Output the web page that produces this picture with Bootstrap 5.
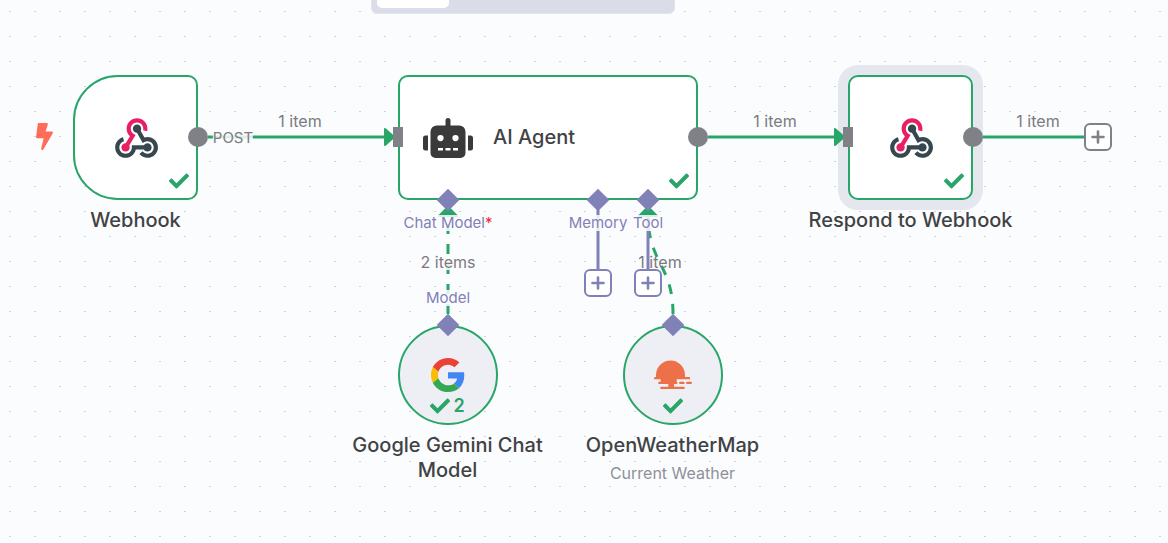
<!DOCTYPE html>
<html lang="en">
<head>
<meta charset="utf-8">
<meta name="viewport" content="width=device-width, initial-scale=1">
<title>Workflow editor</title>
<link href="https://cdn.jsdelivr.net/npm/bootstrap@5.3.0/dist/css/bootstrap.min.css" rel="stylesheet">
<style>
  :root { --ok: #29a568; --port: #7f8186; --ai: #7f81b7; --paper: #fbfcfe; --ink: #414244; }
  body { font-family: Inter, "Liberation Sans", sans-serif; color: var(--ink); background: var(--paper); }

  /* dotted canvas */
  .canvas { min-height: 100vh; background: linear-gradient(#c9cbd1, #c9cbd1) 9px 11px / 25px 25px var(--paper); background: conic-gradient(from 270deg at 2px 1px, #d0d2d7 90deg, transparent 0) 9px 11px / 25px 25px var(--paper); }
  .edges { position: absolute; left: 0; top: 0; width: 100%; height: 100%; overflow: visible; pointer-events: none; }

  /* editor / executions switch */
  .view-tabs { left: 371px; top: -24px; width: 304px; height: 38px; padding: 5px; background: #dadde8; border-radius: 6px; border: 1px solid #e3e5ee; }
  .view-tabs button { width: 72px; border: 0; border-radius: 5px; background: transparent; }
  .view-tabs .current { background: #fff; }

  /* nodes */
  .flow-node { position: absolute; width: 225px; z-index: 1; }
  .node-box { position: relative; width: 125px; height: 125px; border: 2px solid var(--ok); border-radius: 10px; background: #fff; }
  .node-trigger { border-radius: 45px 10px 10px 45px; }
  .node-agent { width: 300px; padding-left: 23px; gap: 20px; }
  .node-round { width: 100px; height: 100px; border-radius: 50%; background: #eeeff5; }
  .node-selected { box-shadow: 0 0 0 10px #e5e7ef; }
  .node-title { font-size: 20px; line-height: 25px; font-weight: 450; }
  .node-sub { margin-top: 5px; font-size: 16px; line-height: 20px; color: #8f9199; }
  .node-status { position: absolute; right: 7px; bottom: 7px; gap: 3px; color: var(--ok); font-size: 18px; line-height: 22px; font-weight: 600; }
  .node-round .node-status { left: 0; right: 0; bottom: 6px; min-height: 22px; }
  #webhook { left: 23px; top: 75px; }
  #agent { left: 398px; top: 75px; width: 300px; }
  #respond { left: 798px; top: 75px; }
  #gemini { left: 335px; top: 325px; }
  #weather { left: 560px; top: 325px; }
  .trigger-mark { position: absolute; left: 36px; top: 123px; }

  /* ports */
  .port { position: absolute; z-index: 3; width: 20px; height: 20px; background: var(--port); transform: translate(-50%, -50%); }
  .port-out { border-radius: 50%; }
  .port-in { width: 10px; }
  .port-ai { width: 16px; height: 16px; background: var(--ai); transform: translate(-50%, -50%) rotate(45deg); }

  /* labels */
  .tag { position: absolute; z-index: 2; transform: translate(-50%, -50%); white-space: nowrap; font-size: 16px; line-height: 16px; color: #7a7b80; }
  .tag-port { font-size: 15px; background: rgba(251, 252, 254, .85); }
  .tag-items { background: rgba(251, 252, 254, .85); }
  .tag-ai { color: var(--ai); }
  .tag-req { color: #f0282d; }

  .add-btn { position: absolute; z-index: 2; width: 28px; height: 28px; border: 2px solid var(--port); border-radius: 6px; background: #fff; color: var(--port); transform: translate(-50%, -50%); }
  .add-ai { border-color: var(--ai); color: var(--ai); }
</style>
</head>
<body>
<svg width="0" height="0" class="position-absolute" aria-hidden="true">
  <symbol id="i-hook" viewBox="0 0 48 48">
    <path fill="#37474f" d="M35 37c-2.2 0-4-1.8-4-4s1.8-4 4-4 4 1.8 4 4-1.8 4-4 4"/>
    <path fill="#37474f" d="M35 43c-3 0-5.9-1.4-7.8-3.7l3.1-2.5c1.1 1.4 2.9 2.3 4.7 2.3 3.3 0 6-2.7 6-6s-2.7-6-6-6c-1 0-2 .3-2.9.7l-1.7 1L23.3 16l3.5-1.9 5.3 9.4c1-.3 2-.5 3-.5 5.5 0 10 4.5 10 10S40.5 43 35 43"/>
    <path fill="#37474f" d="M14 43C8.5 43 4 38.5 4 33c0-4.6 3.1-8.5 7.5-9.7l1 3.9C9.9 27.9 8 30.3 8 33c0 3.3 2.7 6 6 6s6-2.7 6-6v-2h15v4H23.8c-.9 4.6-5 8-9.8 8"/>
    <path fill="#e91e63" d="M14 37c-2.2 0-4-1.8-4-4s1.8-4 4-4 4 1.8 4 4-1.8 4-4 4"/>
    <path fill="#37474f" d="M25 19c-2.2 0-4-1.8-4-4s1.8-4 4-4 4 1.8 4 4-1.8 4-4 4"/>
    <path fill="#e91e63" d="m15.7 34-3.4-2 5.9-9.7c-2-1.9-3.2-4.5-3.2-7.3 0-5.5 4.5-10 10-10s10 4.5 10 10c0 .9-.1 1.7-.3 2.5l-3.9-1c.1-.5.2-1 .2-1.5 0-3.3-2.7-6-6-6s-6 2.7-6 6c0 2.1 1.1 4 2.9 5.1l1.7 1z"/>
  </symbol>
  <symbol id="i-check" viewBox="0 0 512 512">
    <path fill="currentColor" d="M173.9 439.4 7.5 273c-10-10-10-26.200 0-36.200l36.200-36.200c10-10 26.200-10 36.200 0L192 312.700 432.100 72.600c10-10 26.200-10 36.200 0l36.200 36.200c10 10 10 26.200 0 36.200L210.100 439.400c-10 10-26.200 10-36.200 0z"/>
  </symbol>
  <symbol id="i-plus" viewBox="0 0 14 14">
    <path d="M7 1.500v11M1.500 7h11" fill="none" stroke="currentColor" stroke-width="2.600" stroke-linecap="round"/>
  </symbol>
</svg>

<main class="canvas position-relative overflow-hidden">
  <div class="view-tabs position-absolute d-flex" role="group" aria-label="View">
    <button type="button" class="current" aria-label="Editor" aria-pressed="true"></button>
    <button type="button" class="flex-grow-1" aria-label="Executions" aria-pressed="false"></button>
  </div>

  <svg class="trigger-mark" width="17" height="27" viewBox="0 0 320 512" aria-hidden="true"><path fill="#ff6d5a" d="M296 160H180.600l42.600-129.800C227.200 15 215.700 0 200 0H56C44 0 33.800 8.900 32.200 20.800l-32 240C-1.700 275.200 9.500 288 24 288h118.700L96.600 482.500c-3.600 15.200 8 29.500 23.300 29.500 8.400 0 16.400-4.400 20.800-12l176-304c9.300-15.900-2.200-36-20.700-36z"/></svg>

  <article class="flow-node d-flex flex-column align-items-center gap-2" id="webhook">
    <div class="node-box node-trigger d-flex align-items-center justify-content-center">
      <svg width="50" height="50"><use href="#i-hook"/></svg>
      <div class="node-status d-flex"><svg width="20" height="20"><use href="#i-check"/></svg></div>
    </div>
    <div class="node-title text-center">Webhook</div>
  </article>

  <article class="flow-node" id="agent">
    <div class="node-box node-agent d-flex align-items-center">
      <svg width="50" height="40" viewBox="0 0 640 512"><path fill="#3a3a3a" d="M32 224H64V416H32A32 32 0 0 1 0 384V256A32 32 0 0 1 32 224Zm512-48V448a64 64 0 0 1-64 64H160a64 64 0 0 1-64-64V176a80 80 0 0 1 80-80H288V32a32 32 0 0 1 64 0V96H464A80 80 0 0 1 544 176ZM264 256a40 40 0 1 0-40 40A40 40 0 0 0 264 256Zm-8 128H192v32h64Zm96 0H288v32h64ZM456 256a40 40 0 1 0-40 40A40 40 0 0 0 456 256Zm-8 128H384v32h64ZM640 256V384a32 32 0 0 1-32 32H576V224h32A32 32 0 0 1 640 256Z"/></svg>
      <div class="node-title">AI Agent</div>
      <div class="node-status d-flex"><svg width="20" height="20"><use href="#i-check"/></svg></div>
    </div>
  </article>

  <article class="flow-node d-flex flex-column align-items-center gap-2" id="respond">
    <div class="node-box node-selected d-flex align-items-center justify-content-center">
      <svg width="50" height="50"><use href="#i-hook"/></svg>
      <div class="node-status d-flex"><svg width="20" height="20"><use href="#i-check"/></svg></div>
    </div>
    <div class="node-title text-center position-relative">Respond to Webhook</div>
  </article>

  <article class="flow-node d-flex flex-column align-items-center gap-2" id="gemini">
    <div class="node-box node-round d-flex align-items-center justify-content-center">
      <svg width="34" height="34" viewBox="0 0 48 48">
        <path fill="#ea4335" d="M24 9.500c3.540 0 6.710 1.220 9.210 3.600l6.850-6.850C35.900 2.380 30.470 0 24 0 14.620 0 6.510 5.380 2.560 13.220l7.980 6.190C12.430 13.720 17.740 9.500 24 9.500z"/>
        <path fill="#4285f4" d="M46.980 24.550c0-1.570-.15-3.090-.38-4.550H24v9.020h12.940c-.58 2.960-2.260 5.480-4.780 7.180l7.730 6c4.510-4.180 7.090-10.360 7.090-17.650z"/>
        <path fill="#fbbc05" d="M10.530 28.590c-.48-1.450-.76-2.990-.76-4.590s.27-3.140.76-4.590l-7.980-6.190C.92 16.460 0 20.120 0 24c0 3.880.92 7.540 2.560 10.780l7.970-6.190z"/>
        <path fill="#34a853" d="M24 48c6.480 0 11.930-2.130 15.890-5.810l-7.730-6c-2.150 1.450-4.920 2.300-8.160 2.300-6.260 0-11.570-4.220-13.470-9.910l-7.980 6.190C6.510 42.620 14.620 48 24 48z"/>
      </svg>
      <div class="node-status d-flex align-items-center justify-content-center"><svg width="20" height="20"><use href="#i-check"/></svg><span>2</span></div>
    </div>
    <div class="node-title text-center">Google Gemini Chat Model</div>
  </article>

  <article class="flow-node d-flex flex-column align-items-center gap-2" id="weather">
    <div class="node-box node-round d-flex align-items-center justify-content-center">
      <svg width="38" height="30" viewBox="0 0 114 90"><g fill="#ee7048">
        <path d="M6 51v-6a43.500 43.500 0 0 1 87 0v6h12a3.500 3.500 0 0 1 0 7H68v7h-1a3.500 3.500 0 0 1 0 7h-7v8h29a3.500 3.500 0 0 1 0 7H22a3.500 3.500 0 0 1 0-7h21v-8H16a3.500 3.500 0 0 1 0-7h4v-7H3.500a3.500 3.500 0 0 1 0-7z"/>
        <rect x="75" y="65" width="17" height="7" rx="3.500"/><rect x="96" y="65" width="18" height="7" rx="3.500"/></g></svg>
      <div class="node-status d-flex align-items-center justify-content-center"><svg width="20" height="20"><use href="#i-check"/></svg></div>
    </div>
    <div class="text-center">
      <div class="node-title">OpenWeatherMap</div>
      <div class="node-sub">Current Weather</div>
    </div>
  </article>

  <!-- connections -->
  <svg class="edges z-1" fill="none" stroke="#29a568" stroke-width="3" aria-hidden="true">
    <path d="M208 137H386M708 137H836M983 137H1084"/>
    <path d="M448 314V214M673 314C673 264 648 264 648 214" stroke-dasharray="10 10"/>
    <path d="M598 210V270M648 210V270" stroke="#7f81b7"/>
    <g fill="#29a568" stroke-width="2" stroke-linejoin="round">
      <path d="M385 129v16l9-8zM835 129v16l9-8zM439 216h18l-9-9zM639 216h18l-9-9z"/>
    </g>
  </svg>

  <span class="port port-out" style="left:198px;top:137px"></span>
  <span class="port port-in" style="left:398px;top:137px"></span>
  <span class="port port-out" style="left:698px;top:137px"></span>
  <span class="port port-in" style="left:848px;top:137px"></span>
  <span class="port port-out" style="left:973px;top:137px"></span>
  <span class="port port-ai" style="left:448px;top:200px"></span>
  <span class="port port-ai" style="left:598px;top:200px"></span>
  <span class="port port-ai" style="left:648px;top:200px"></span>
  <span class="port port-ai" style="left:448px;top:325px"></span>
  <span class="port port-ai" style="left:673px;top:325px"></span>

  <span class="tag tag-port" style="left:233px;top:138px">POST</span>
  <span class="tag tag-port tag-ai" style="left:448px;top:223px">Chat Model<span class="tag-req">*</span></span>
  <span class="tag tag-port tag-ai" style="left:598px;top:223px">Memory</span>
  <span class="tag tag-port tag-ai" style="left:648px;top:223px">Tool</span>
  <span class="tag tag-port tag-ai" style="left:448px;top:298px">Model</span>
  <span class="tag" style="left:300px;top:121px">1 item</span>
  <span class="tag" style="left:775px;top:121px">1 item</span>
  <span class="tag" style="left:1038px;top:121px">1 item</span>
  <span class="tag tag-items" style="left:448px;top:262px">2 items</span>
  <span class="tag" style="left:660px;top:262px">1 item</span>

  <button type="button" class="add-btn d-flex align-items-center justify-content-center p-0" style="left:1098px;top:137px" aria-label="Add node"><svg width="14" height="14"><use href="#i-plus"/></svg></button>
  <button type="button" class="add-btn add-ai d-flex align-items-center justify-content-center p-0" style="left:598px;top:283px" aria-label="Add memory"><svg width="14" height="14"><use href="#i-plus"/></svg></button>
  <button type="button" class="add-btn add-ai d-flex align-items-center justify-content-center p-0" style="left:648px;top:283px" aria-label="Add tool"><svg width="14" height="14"><use href="#i-plus"/></svg></button>
</main>
<script src="https://cdn.jsdelivr.net/npm/bootstrap@5.3.0/dist/js/bootstrap.bundle.min.js"></script>
</body>
</html>
